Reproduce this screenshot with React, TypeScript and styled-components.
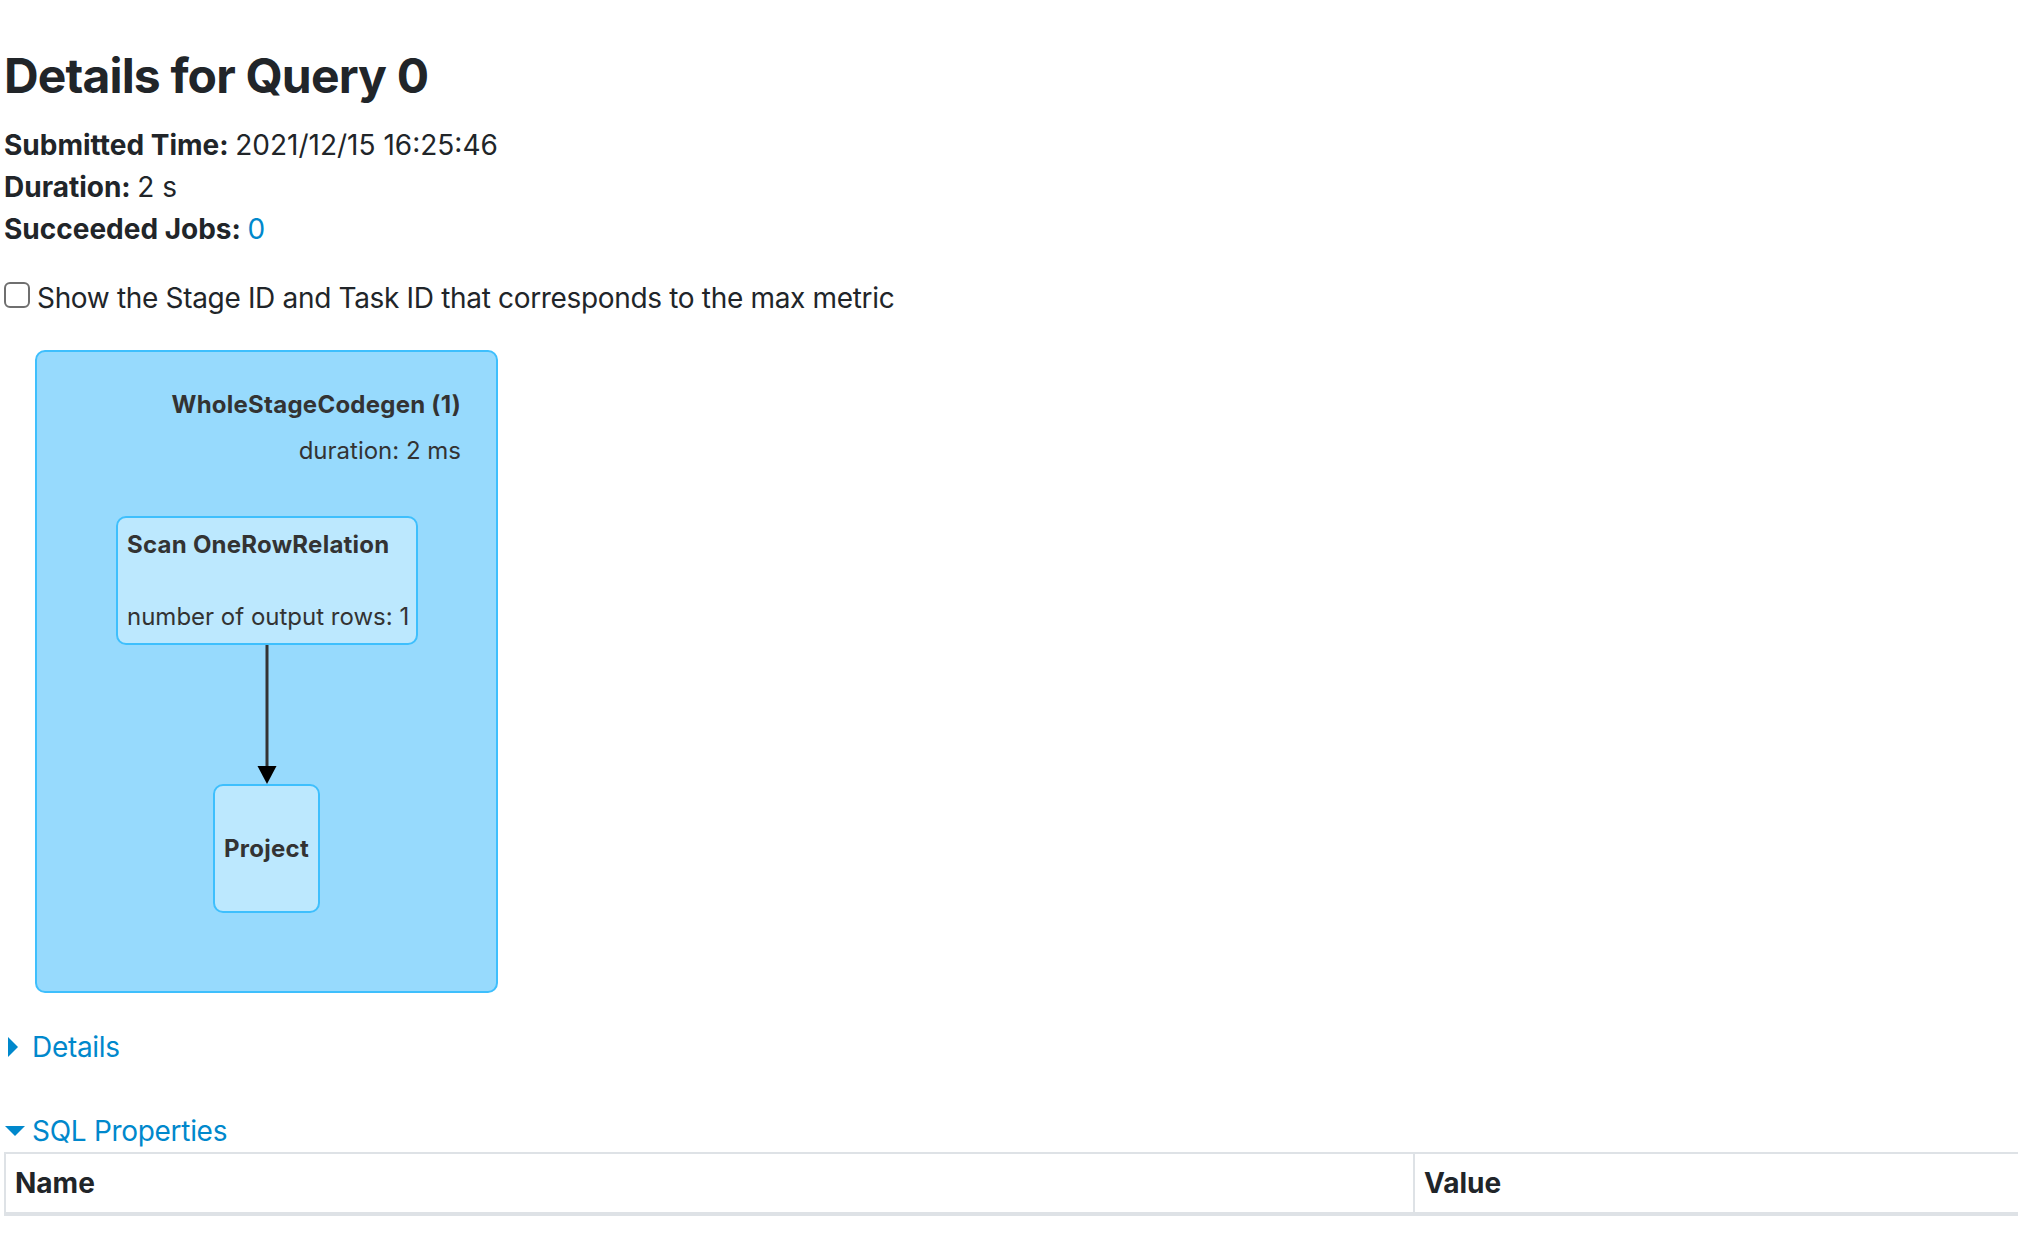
import React from "react";
import styled, { createGlobalStyle } from "styled-components";

const GlobalStyle = createGlobalStyle`
  html, body {
    margin: 0;
    padding: 0;
    overflow: hidden;
    background: #ffffff;
  }
  body {
    font-family: Inter, "Liberation Sans", sans-serif;
    color: #212529;
  }
`;

const Page = styled.div`
  display: flex;
  flex-direction: column;
  align-items: flex-start;
  padding-left: 4px;
  width: 2014px;
`;

const Title = styled.h3`
  margin: 47px 0 19px 0;
  font-size: 48px;
  line-height: 57.6px;
  font-weight: 700;
  letter-spacing: -0.85px;
  color: #212529;
`;

const InfoList = styled.ul`
  list-style: none;
  margin: 0;
  padding: 0;
`;

const InfoItem = styled.li`
  font-size: 28px;
  line-height: 42px;
  white-space: nowrap;
`;

const Strong = styled.strong`
  font-weight: 700;
`;

const Link = styled.a`
  color: #0088cc;
  text-decoration: none;
  cursor: pointer;
`;

const CheckRow = styled.label`
  display: flex;
  align-items: center;
  gap: 7px;
  margin-top: 27px;
  font-size: 28px;
  line-height: 42px;
  letter-spacing: -0.33px;
  white-space: nowrap;
`;

const CheckBox = styled.input`
  appearance: none;
  -webkit-appearance: none;
  margin: -5px 0 0 0;
  width: 26px;
  height: 26px;
  box-sizing: border-box;
  border: 2px solid #6f6f6f;
  border-radius: 6px;
  background: #ffffff;
`;

const Cluster = styled.div`
  position: relative;
  box-sizing: border-box;
  margin: 31px 0 0 31px;
  width: 463px;
  height: 643px;
  border: 2px solid #3ebffd;
  border-radius: 10px;
  background: #97dafd;
  padding: 41px 35px 0 0;
  display: flex;
  flex-direction: column;
  align-items: flex-end;
  color: #333333;
`;

const ClusterLabel = styled.div<{ $bold?: boolean; $gap?: number }>`
  font-size: 24px;
  line-height: 24px;
  font-weight: ${(p) => (p.$bold ? 700 : 400)};
  letter-spacing: ${(p) => (p.$bold ? "0.25px" : "0")};
  margin-top: ${(p) => p.$gap ?? 0}px;
  white-space: nowrap;
`;

const Node = styled.div<{ $center?: boolean }>`
  position: absolute;
  box-sizing: border-box;
  border: 2px solid #3ebffd;
  border-radius: 10px;
  background: #bce8fe;
  color: #333333;
  display: flex;
  flex-direction: column;
  align-items: ${(p) => (p.$center ? "center" : "flex-start")};
`;

const NodeLine = styled.div<{ $bold?: boolean; $gap?: number }>`
  font-size: 24px;
  line-height: 24px;
  font-weight: ${(p) => (p.$bold ? 700 : 400)};
  letter-spacing: ${(p) => (p.$bold ? "0.25px" : "0")};
  margin-top: ${(p) => p.$gap ?? 0}px;
  white-space: nowrap;
`;

const Edge = styled.svg`
  position: absolute;
  overflow: visible;
`;

const Toggle = styled.div<{ $gap: number }>`
  display: flex;
  align-items: center;
  margin-top: ${(p) => p.$gap}px;
  font-size: 28px;
  line-height: 42px;
  letter-spacing: -0.3px;
  color: #0088cc;
  cursor: pointer;
`;

const ArrowClosed = styled.span`
  display: inline-block;
  width: 0;
  height: 0;
  border-top: 10px solid transparent;
  border-bottom: 10px solid transparent;
  border-left: 10px solid #0088cc;
  margin: 0 14px 0 4px;
`;

const ArrowOpen = styled.span`
  display: inline-block;
  width: 0;
  height: 0;
  border-left: 10px solid transparent;
  border-right: 10px solid transparent;
  border-top: 10px solid #0088cc;
  margin: 0 7px 0 1px;
`;

const Table = styled.table`
  border-collapse: collapse;
  width: 2030px;
  font-size: 28px;
  line-height: 42px;
  table-layout: fixed;
`;

const HeadCell = styled.th<{ $w?: number }>`
  text-align: left;
  font-weight: 700;
  padding: 8px 9px;
  border: 2px solid #dee2e6;
  border-bottom: 4px solid #dee2e6;
  width: ${(p) => (p.$w ? `${p.$w}px` : "auto")};
`;

export default function App() {
  return (
    <>
      <GlobalStyle />
      <Page>
        <Title>Details for Query 0</Title>
        <InfoList>
          <InfoItem>
            <Strong>Submitted Time: </Strong>2021/12/15 16:25:46
          </InfoItem>
          <InfoItem>
            <Strong>Duration: </Strong>2 s
          </InfoItem>
          <InfoItem>
            <Strong>Succeeded Jobs: </Strong>
            <Link>0</Link>
          </InfoItem>
        </InfoList>
        <CheckRow>
          <CheckBox type="checkbox" />
          Show the Stage ID and Task ID that corresponds to the max metric
        </CheckRow>

        <Cluster>
          <ClusterLabel $bold>WholeStageCodegen (1)</ClusterLabel>
          <ClusterLabel $gap={22}>duration: 2 ms</ClusterLabel>

          <Node style={{ left: 79, top: 164, width: 302, height: 129, padding: "15px 9px 0" }}>
            <NodeLine $bold>Scan OneRowRelation</NodeLine>
            <NodeLine $gap={48}>number of output rows: 1</NodeLine>
          </Node>

          <Edge width="20" height="140" viewBox="0 0 20 140" style={{ left: 220, top: 293 }}>
            <line x1="10" y1="0" x2="10" y2="122" stroke="#333333" strokeWidth="3" />
            <path d="M0.5 121 L19.5 121 L10 139 Z" fill="#000000" />
          </Edge>

          <Node $center style={{ left: 176, top: 432, width: 107, height: 129, paddingTop: 51 }}>
            <NodeLine $bold>Project</NodeLine>
          </Node>
        </Cluster>

        <Toggle $gap={33}>
          <ArrowClosed />
          Details
        </Toggle>
        <Toggle $gap={42}>
          <ArrowOpen />
          SQL Properties
        </Toggle>
        <Table>
          <thead>
            <tr>
              <HeadCell $w={1389}>Name</HeadCell>
              <HeadCell>Value</HeadCell>
            </tr>
          </thead>
        </Table>
      </Page>
    </>
  );
}
